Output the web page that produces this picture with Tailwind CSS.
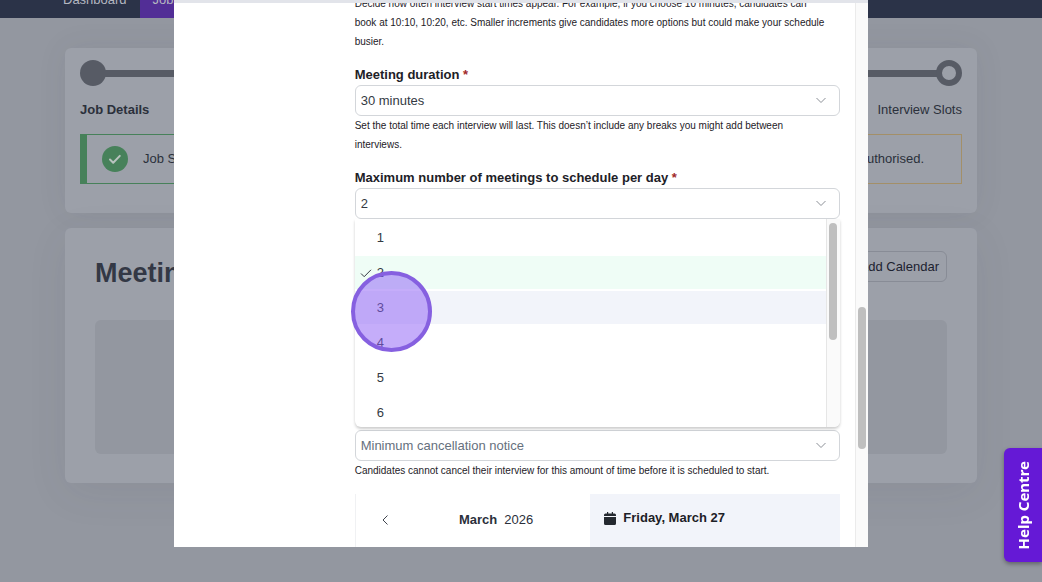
<!DOCTYPE html>
<html lang="en">
<head>
  <meta charset="UTF-8" />
  <meta name="viewport" content="width=device-width, initial-scale=1.0" />
  <title>Meeting Availability</title>
  <script src="https://cdn.jsdelivr.net/npm/@tailwindcss/browser@4"></script>
</head>
<body class="h-screen overflow-hidden bg-[#9397a0] font-['Liberation_Sans',Arial,sans-serif] text-[13px] leading-5 text-[#2b303b]">

  <!-- Navigation -->
  <nav class="flex h-[18px] items-end overflow-hidden bg-[#2b3348] pl-[50px] text-[#b4b7c0]">
    <a href="#dashboard" class="px-[13px] pb-2">Dashboard</a>
    <a href="#jobs" class="bg-[#522e96] px-[13px] pb-2">Jobs</a>
  </nav>

  <!-- Page behind the dialog -->
  <main class="flex flex-col gap-[15px] px-[65px] pt-[30px]">
    <section class="h-[165px] rounded-md bg-[#9ca0a9] px-[15px] pt-3 shadow-[0_0_30px_rgba(60,65,80,0.08)]">
      <div class="flex items-center">
        <span class="size-[26px] rounded-full bg-[#575b65]"></span>
        <span class="-mx-px h-[7px] flex-1 bg-[#575b65]"></span>
        <span class="size-[26px] rounded-full border-[6px] border-[#575b65]"></span>
      </div>
      <div class="mt-3.5 flex justify-between">
        <span class="font-bold">Job Details</span>
        <span>Interview Slots</span>
      </div>
      <div class="mt-3.5 flex justify-between">
        <div class="flex h-[50px] w-2/5 items-center gap-[15px] border border-l-[7px] border-[#47815a] pl-[15px]">
          <svg class="size-[26px]" viewBox="0 0 26 26" fill="none">
            <circle cx="13" cy="13" r="13" fill="#47815a" />
            <path d="M8 13.5l3.2 3.2 6.6-6.8" stroke="#b9c3bf" stroke-width="2" stroke-linecap="round" stroke-linejoin="round" />
          </svg>
          <span>Job Saved</span>
        </div>
        <div class="flex h-[50px] w-2/5 items-center justify-end border border-[#a38f68] pr-[37px]">
          <span>Authorised.</span>
        </div>
      </div>
    </section>

    <section class="h-[255px] rounded-md bg-[#9ca0a9] px-[30px] pt-[23px] shadow-[0_10px_40px_rgba(60,65,80,0.08)]">
      <div class="flex items-start justify-between">
        <h1 class="pt-1.5 text-[27px] leading-8 font-bold text-[#333845]">Meetings</h1>
        <button class="h-[31px] rounded-md border border-[#888c96] px-[7px] text-[#1c2230]">Add Calendar</button>
      </div>
      <div class="mt-[31px] h-[134px] rounded-md bg-[#9397a0]"></div>
    </section>
  </main>

  <!-- Dialog -->
  <div role="dialog" aria-label="Meeting settings" class="fixed inset-x-0 top-0 mx-auto flex h-[547px] w-2/3 flex-col bg-white text-[#1d2127]">
    <div class="h-[3px] shrink-0 bg-[#e2e4ea]"></div>
    <div class="flex min-h-0 flex-1">
      <form class="min-w-0 flex-1 overflow-hidden pr-[15px] pl-[181px]">
        <p class="-mt-[9px] text-[10px] leading-[19px]">Decide how often interview start times appear. For example, if you choose 10 minutes, candidates can<br />book at 10:10, 10:20, etc. Smaller increments give candidates more options but could make your schedule<br />busier.</p>

        <div class="mt-3.5">
          <label for="duration" class="block font-bold">Meeting duration <span class="text-[#a12a2a]">*</span></label>
          <div class="relative">
            <select id="duration" class="block h-[31px] w-full appearance-none rounded-md border border-[#d3d6da] bg-white px-[5px] text-[#343a43]">
              <option>30 minutes</option>
            </select>
            <svg class="pointer-events-none absolute top-2.5 right-3.5 size-[10px]" viewBox="0 0 10 10" fill="none" stroke="#8b8f96"><path d="M.5 3L5 7.5 9.5 3" /></svg>
          </div>
          <p class="text-[10px] leading-[19px]">Set the total time each interview will last. This doesn’t include any breaks you might add between<br />interviews.</p>
        </div>

        <div class="mt-3.5">
          <label for="max-meetings" class="block font-bold">Maximum number of meetings to schedule per day <span class="text-[#a12a2a]">*</span></label>
          <div class="relative">
            <select id="max-meetings" class="block h-[31px] w-full appearance-none rounded-md border border-[#d3d6da] bg-white px-[5px] text-[#343a43]">
              <option>2</option>
            </select>
            <svg class="pointer-events-none absolute top-2.5 right-3.5 size-[10px]" viewBox="0 0 10 10" fill="none" stroke="#8b8f96"><path d="M.5 3L5 7.5 9.5 3" /></svg>

            <!-- Open list -->
            <div class="absolute inset-x-0 top-full z-10 flex h-[208px] overflow-hidden rounded-b-md bg-white shadow-[0_2px_3px_rgba(0,0,0,0.2)]">
              <ul role="listbox" aria-label="Meetings per day" class="flex flex-1 flex-col gap-0.5 pt-0.5 text-[#343a43]">
                <li role="option" class="flex h-[33px] shrink-0 items-center pl-[22px]">1</li>
                <li role="option" aria-selected="true" class="flex h-[33px] shrink-0 items-center gap-[5px] bg-[#effdf6] pl-[5px]">
                  <svg class="size-3" viewBox="0 0 12 12" fill="none" stroke="#343a43"><path d="M1 6.5l3.2 3.2L11 2.8" /></svg>
                  2
                </li>
                <li role="option" class="flex h-[33px] shrink-0 items-center bg-[#f2f4fa] pl-[22px]">3</li>
                <li role="option" class="flex h-[33px] shrink-0 items-center pl-[22px]">4</li>
                <li role="option" class="flex h-[33px] shrink-0 items-center pl-[22px]">5</li>
                <li role="option" class="flex h-[33px] shrink-0 items-center pl-[22px]">6</li>
              </ul>
              <div class="w-3.5 border-l border-[#e6e6e6] bg-[#fafafa] pt-1 pr-[3px] pl-0.5">
                <div class="h-[117px] rounded-full bg-[#bfbfbf]"></div>
              </div>
            </div>

            <!-- Click highlight -->
            <div class="pointer-events-none absolute top-[83px] -left-1 z-20 size-[81px] rounded-full border-4 border-[#8660e0] bg-[#8b5cf6]/50"></div>
          </div>
        </div>

        <div class="mt-[211px]">
          <div class="relative">
            <select aria-label="Minimum cancellation notice" class="block h-[31px] w-full appearance-none rounded-md border border-[#d3d6da] bg-white px-[5px] text-[#66707d]">
              <option>Minimum cancellation notice</option>
            </select>
            <svg class="pointer-events-none absolute top-2.5 right-3.5 size-[10px]" viewBox="0 0 10 10" fill="none" stroke="#8b8f96"><path d="M.5 3L5 7.5 9.5 3" /></svg>
          </div>
          <p class="text-[10px] leading-[19px]">Candidates cannot cancel their interview for this amount of time before it is scheduled to start.</p>
        </div>

        <!-- Calendar -->
        <div class="mt-3.5 flex h-[120px]">
          <div class="flex flex-1 items-start border-l border-[#f0f1f3] pt-4">
            <button type="button" aria-label="Previous month" class="flex h-5 w-[58px] items-center justify-center">
              <svg class="size-[10px]" viewBox="0 0 10 10" fill="none" stroke="#40454e"><path d="M7.5 .5L3 5l4.500 4.500" /></svg>
            </button>
            <div class="flex flex-1 justify-center gap-[7px] text-[#2b303b]"><span class="font-bold">March</span><span>2026</span></div>
            <div class="w-3"></div>
          </div>
          <div class="flex w-[250px] items-start gap-[7px] bg-[#f2f4fa] pt-3.5 pl-3.5">
            <svg class="mt-1 h-[13px] w-3" viewBox="0 0 12 13" fill="#24282f"><path d="M3 0h1.200v1.500h3.600V0H9v1.500h1.500Q12 1.500 12 3v1H0V3q0-1.500 1.500-1.500H3zM0 5h12v6.500q0 1.500-1.500 1.500h-9Q0 13 0 11.500z" /></svg>
            <span class="font-bold">Friday, March 27</span>
          </div>
        </div>
      </form>
      <div class="w-[13px] border-l border-[#ebebeb] bg-[#fafafa] px-0.5 pt-[304px]">
        <div class="h-[142px] rounded-full bg-[#bfbfbf]"></div>
      </div>
    </div>
  </div>

  <!-- Help tab -->
  <button class="fixed right-0 bottom-5 flex h-[114px] w-[38px] items-center justify-center rounded-l-md bg-[#6519d6] shadow-[0_2px_4px_rgba(0,0,0,0.35)]">
    <span class="rotate-180 font-['Noto_Sans',sans-serif] text-[15px] font-bold text-white [writing-mode:vertical-rl]">Help Centre</span>
  </button>
</body>
</html>
